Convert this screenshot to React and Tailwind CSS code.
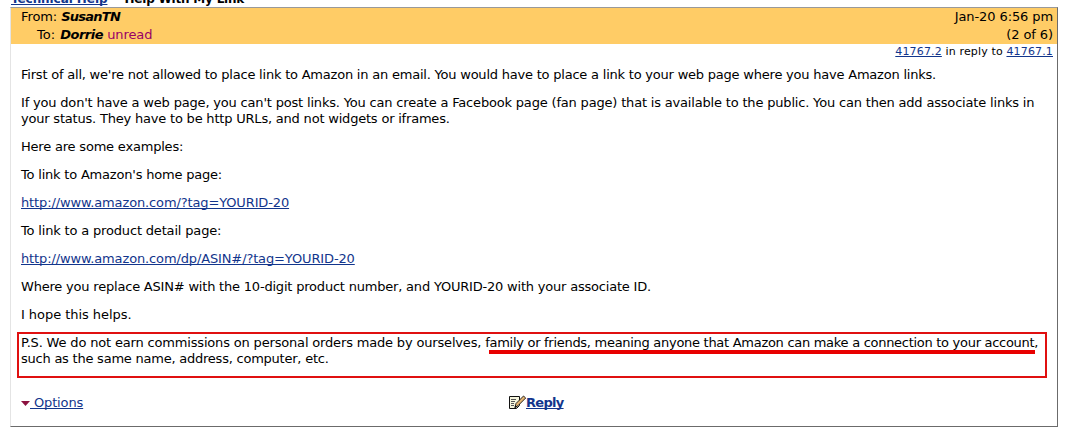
// App.jsx

const Link = ({ children, className = "" }) => (
  <a
    href="#"
    className={`text-[#12358c] underline underline-offset-1 decoration-1 [text-decoration-skip-ink:none] ${className}`}
  >
    {children}
  </a>
);

const ReplyIcon = () => (
  <svg width="19" height="15" viewBox="0 0 19 15" className="mb-[2px] shrink-0">
    <path d="M1.500 1.500h10v9l-3 3h-7z" fill="#f6f6dd" stroke="#111" />
    <path d="M3 4.500h5M3 6.500h4M3 8.500h3M3 10.500h3" stroke="#555" />
    <path d="M7 12.500l1-4 7.500-7.500 2.200 2-7.700 7.700z" fill="#e5b470" stroke="#111" strokeWidth=".9" />
    <path d="M6.500 13l.8-3 2 2z" fill="#111" />
  </svg>
);

export default function App() {
  return (
    <div className="h-[438px] w-[1065px] overflow-hidden bg-white font-['DejaVu_Sans',sans-serif] text-[13px] leading-4 text-black">
      <div className="flex h-[7px] items-end gap-[17px] overflow-hidden pl-[11px] text-[12px] font-bold whitespace-pre">
        <Link className="tracking-[-0.07px]">Technical Help</Link>
        <span className="tracking-[-0.2px]">Help With My Link</span>
      </div>

      <div className="ml-[10px] flex h-[420px] w-[1048px] flex-col border border-t-[#999999] border-r-[#6b6b6b] border-b-[#6b6b6b] border-l-[#e4e4e4]">
        <div className="flex h-9 justify-between bg-[#ffcc66] pr-1 pl-[10px] leading-[18px]">
          <div>
            <p>
              <span className="tracking-[-0.1px]">From: </span>
              <b className="tracking-[-0.75px] italic">SusanTN</b>
            </p>
            <p className="pl-4">
              To: <b className="ml-px tracking-[-0.5px] italic">Dorrie</b>{" "}
              <span className="tracking-[-0.1px] text-[#990066]">unread</span>
            </p>
          </div>
          <div className="text-right tracking-[-0.1px]">
            <p>Jan-20 6:56 pm</p>
            <p>(2 of 6)</p>
          </div>
        </div>
        <p className="h-[15px] pr-1 text-right text-[11px] leading-[15px] tracking-[0.15px]">
          <Link>41767.2</Link> in reply to <Link>41767.1</Link>
        </p>

        <div className="flex flex-col gap-3 pt-2 pl-[10px] tracking-[-0.2px] whitespace-nowrap">
          <p className="tracking-[-0.214px]">
            First of all, we're not allowed to place link to Amazon in an email. You would have to place a link to your web page where you have Amazon links.
          </p>
          <p className="tracking-[-0.18px]">
            If you don't have a web page, you can't post links. You can create a Facebook page (fan page) that is available to the public. You can then add associate links in
            <br />
            <span className="tracking-[-0.2px]">your status. They have to be http URLs, and not widgets or iframes.</span>
          </p>
          <p>Here are some examples:</p>
          <p>To link to Amazon's home page:</p>
          <p>
            <Link className="tracking-[-0.13px]">http://www.amazon.com/?tag=YOURID-20</Link>
          </p>
          <p className="tracking-[-0.17px]">To link to a product detail page:</p>
          <p>
            <Link className="tracking-[-0.13px]">http://www.amazon.com/dp/ASIN#/?tag=YOURID-20</Link>
          </p>
          <p>Where you replace ASIN# with the 10-digit product number, and YOURID-20 with your associate ID.</p>
          <p className="tracking-[-0.05px]">I hope this helps.</p>
        </div>

        <div className="relative mt-[9px] ml-[6px] h-[46px] w-[1030px] border-2 border-[#e01010] pt-[1px] pl-[2px] whitespace-nowrap">
          <p className="tracking-[-0.17px]">
            P.S. We do not earn commissions on personal orders made by ourselves,{" "}
            <span className="tracking-[-0.285px]">
              family or friends, meaning anyone that Amazon can make a connection to your account,
            </span>
            <br />
            <span className="tracking-[-0.23px]">such as the same name, address, computer, etc.</span>
          </p>
          <span className="absolute top-[16px] left-[470px] h-1 w-[546px] bg-[#e80000]" />
        </div>

        <div className="mt-[15px] flex h-5 items-center pl-[10px]">
          <Link className="flex w-[487px] items-center">
            <svg width="9" height="5" viewBox="0 0 9 5" className="mt-px">
              <path d="M0 0h9L4.500 5z" fill="#8c1240" />
            </svg>
            <span className="tracking-[-0.15px] whitespace-pre underline underline-offset-1 [text-decoration-skip-ink:none]"> Options</span>
          </Link>
          <ReplyIcon />
          <Link className="-ml-px font-bold tracking-[-0.7px]">Reply</Link>
        </div>
      </div>
    </div>
  );
}
